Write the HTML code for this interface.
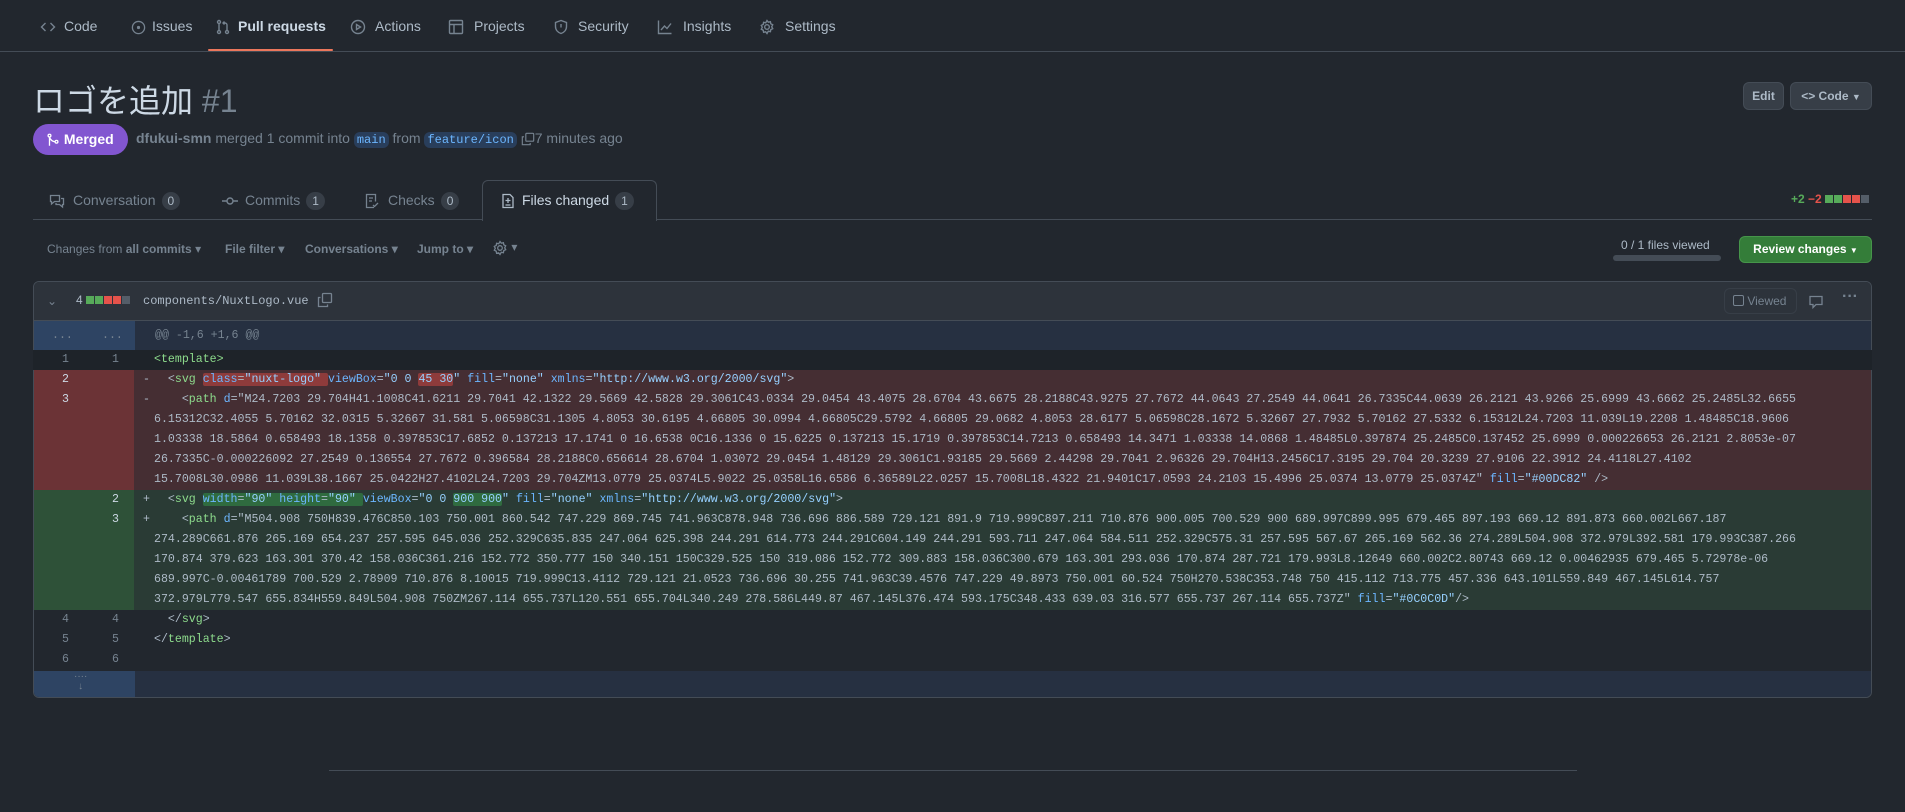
<!DOCTYPE html>
<html><head><meta charset="utf-8">
<style>
*{box-sizing:border-box;margin:0;padding:0}
body{width:1905px;height:812px;background:#22272e;color:#adbac7;font-family:"Liberation Sans","Noto Sans CJK JP",sans-serif;font-size:14px;position:relative;overflow:hidden}
.a{position:absolute;white-space:nowrap}
.nav{position:absolute;left:0;top:0;width:1905px;height:52px;border-bottom:1px solid #444c56}
.nav .a{top:18px;font-size:14px;color:#adbac7}
svg{display:inline-block;vertical-align:middle}
.muted{color:#768390}
.cnt{display:inline-block;background:#373e47;color:#adbac7;border-radius:10px;font-size:12px;padding:1px 6px;margin-left:6px;line-height:16px}
.btn{position:absolute;background:#373e47;border:1px solid #444c56;border-radius:6px;color:#adbac7;font-size:12px;font-weight:bold;text-align:center}
.br{display:inline-block;background:rgba(65,132,228,.25);color:#6cb6ff;font-family:"Liberation Mono",monospace;font-size:12px;padding:1px 3px;border-radius:6px}
.code{font-family:"Liberation Mono",monospace;font-size:11.6px;white-space:pre}
.code .a{white-space:pre}
.row{position:absolute;left:33px;width:1839px;height:20px;line-height:20px}
.n{position:absolute;top:0;width:50px;text-align:right;padding-right:14px;color:#768390;font-family:"Liberation Mono",monospace;font-size:11.6px}
.t{color:#8ddb8c}.at{color:#6cb6ff}.s{color:#96d0ff}
.hr{background:#8e3b3b;border-radius:2px}.hg{background:#2f6b3f;border-radius:2px}
</style></head><body>
<div class="nav">
 <div class="a" style="left:40px"><svg width="16" height="16" viewBox="0 0 16 16" fill="none" stroke="#768390" stroke-width="1.4"><path d="M5.5 4 1.5 8l4 4M10.5 4l4 4-4 4"/></svg></div>
 <div class="a" style="left:64px">Code</div>
 <div class="a" style="left:131px"><svg width="15" height="15" viewBox="0 0 16 16" fill="none" stroke="#768390" stroke-width="1.4"><circle cx="8" cy="8" r="6.5"/><circle cx="8" cy="8" r="1" fill="#768390"/></svg></div>
 <div class="a" style="left:152px">Issues</div>
 <div class="a" style="left:215px"><svg width="16" height="16" viewBox="0 0 16 16" fill="none" stroke="#768390" stroke-width="1.4"><circle cx="4" cy="3" r="1.5"/><circle cx="4" cy="13" r="1.5"/><circle cx="12" cy="13" r="1.5"/><path d="M4 4.5v7M12 11.5V6a2 2 0 0 0-2-2H8M9.5 2.5 8 4l1.5 1.5"/></svg></div>
 <div class="a" style="left:238px;font-weight:bold;color:#cdd9e5">Pull requests</div>
 <div class="a" style="left:350px"><svg width="16" height="16" viewBox="0 0 16 16" fill="none" stroke="#768390" stroke-width="1.4"><circle cx="8" cy="8" r="6.5"/><path d="M6.5 5.5v5l4-2.5z"/></svg></div>
 <div class="a" style="left:375px">Actions</div>
 <div class="a" style="left:448px"><svg width="16" height="16" viewBox="0 0 16 16" fill="none" stroke="#768390" stroke-width="1.4"><rect x="1.5" y="1.5" width="13" height="13" rx="1"/><path d="M1.5 5.5h13M6 5.5v9"/></svg></div>
 <div class="a" style="left:474px">Projects</div>
 <div class="a" style="left:553px"><svg width="16" height="16" viewBox="0 0 16 16" fill="none" stroke="#768390" stroke-width="1.4"><path d="M8 1.5 2.5 3.5v4c0 3.5 2.5 6 5.5 7 3-1 5.5-3.5 5.5-7v-4z"/><path d="M8 5v3.5"/></svg></div>
 <div class="a" style="left:578px">Security</div>
 <div class="a" style="left:657px"><svg width="16" height="16" viewBox="0 0 16 16" fill="none" stroke="#768390" stroke-width="1.4"><path d="M1.5 1.5v13h13M4 11l3.5-4 2.5 2.5 4-5"/></svg></div>
 <div class="a" style="left:683px">Insights</div>
 <div class="a" style="left:759px"><svg width="16" height="16" viewBox="0 0 16 16" fill="none" stroke="#768390" stroke-width="1.4"><circle cx="8" cy="8" r="2.3"/><path d="M8 1.5l1.3 1.7 2.1-.5.4 2.1 1.9 1-1 1.9 1 2-1.9.9-.4 2.1-2.1-.5L8 14.5l-1.3-1.7-2.1.5-.4-2.1-1.9-1 1-1.9-1-1.9 1.9-1 .4-2.1 2.1.5z"/></svg></div>
 <div class="a" style="left:785px">Settings</div>
 <div style="position:absolute;left:208px;top:49px;width:125px;height:2px;background:#ec775c;border-radius:2px"></div>
</div>

<div class="a" style="left:33px;top:76px;font-size:32px;color:#cdd9e5">ロゴを追加 <span class="muted">#1</span></div>
<div class="btn" style="left:1743px;top:82px;width:41px;height:28px;line-height:26px">Edit</div>
<div class="btn" style="left:1790px;top:82px;width:82px;height:28px;line-height:26px">&lt;&gt; Code <span style="font-size:9px">▼</span></div>

<div class="a" style="left:33px;top:124px;width:95px;height:31px;border-radius:16px;background:#8256d0;color:#fff;font-weight:bold;line-height:31px;padding-left:13px"><svg width="14" height="14" viewBox="0 0 16 16" fill="none" stroke="#fff" stroke-width="1.5"><circle cx="4" cy="3" r="1.6"/><circle cx="12" cy="10" r="1.6"/><path d="M4 4.6v10M4 5c1 3 4 5 6.4 5"/></svg> Merged</div>
<div class="a" style="left:136px;top:130px;color:#768390"><b style="color:#768390">dfukui-smn</b> merged 1 commit into <span class="br">main</span> from <span class="br">feature/icon</span> <svg width="14" height="14" viewBox="0 0 16 16" fill="none" stroke="#768390" stroke-width="1.3"><rect x="5.5" y="1.5" width="9" height="9" rx="1"/><path d="M3.5 5.5h-2v9h9v-2"/></svg>7 minutes ago</div>

<div style="position:absolute;left:33px;top:219px;width:1839px;height:1px;background:#444c56"></div>
<div style="position:absolute;left:482px;top:180px;width:175px;height:41px;border:1px solid #444c56;border-bottom:none;border-radius:6px 6px 0 0;background:#22272e"></div>
<div class="a" style="left:49px;top:192px;color:#768390"><svg width="16" height="16" viewBox="0 0 16 16" fill="none" stroke="#768390" stroke-width="1.3"><path d="M1.5 2.5h9v6h-5l-3 2.5v-2.5h-1z M12 5.5h2.5v6h-1v2.5l-3-2.5h-3.5v-1.5"/></svg></div>
<div class="a" style="left:73px;top:192px;color:#768390">Conversation<span class="cnt">0</span></div>
<div class="a" style="left:222px;top:192px"><svg width="16" height="16" viewBox="0 0 16 16" fill="none" stroke="#768390" stroke-width="1.4"><circle cx="8" cy="8" r="3"/><path d="M0 8h5M11 8h5"/></svg></div>
<div class="a" style="left:245px;top:192px;color:#768390">Commits<span class="cnt">1</span></div>
<div class="a" style="left:364px;top:192px"><svg width="16" height="16" viewBox="0 0 16 16" fill="none" stroke="#768390" stroke-width="1.3"><path d="M10 14.5H2.5v-13h9v7M5 5h4M5 8h3M9 12l1.5 1.5L14 10"/></svg></div>
<div class="a" style="left:388px;top:192px;color:#768390">Checks<span class="cnt">0</span></div>
<div class="a" style="left:500px;top:192px"><svg width="16" height="16" viewBox="0 0 16 16" fill="none" stroke="#adbac7" stroke-width="1.3"><path d="M3 1.5h7l3 3v10H3z M8 5v5M5.5 7.5h5M5.5 12h5"/></svg></div>
<div class="a" style="left:522px;top:192px;color:#cdd9e5">Files changed<span class="cnt">1</span></div>
<div class="a" style="left:1791px;top:192px;font-size:12px;font-weight:bold"><span style="color:#57ab5a">+2</span> <span style="color:#e5534b">−2</span> <span style="display:inline-block;width:8px;height:8px;background:#57ab5a"></span><span style="display:inline-block;width:8px;height:8px;background:#57ab5a;margin-left:1px"></span><span style="display:inline-block;width:8px;height:8px;background:#e5534b;margin-left:1px"></span><span style="display:inline-block;width:8px;height:8px;background:#e5534b;margin-left:1px"></span><span style="display:inline-block;width:8px;height:8px;background:#545d68;margin-left:1px"></span></div>

<div class="a" style="left:47px;top:242px;font-size:12px;color:#768390">Changes from <b>all commits</b> ▾</div>
<div class="a" style="left:225px;top:242px;font-size:12px;color:#768390;font-weight:bold">File filter ▾</div>
<div class="a" style="left:305px;top:242px;font-size:12px;color:#768390;font-weight:bold">Conversations ▾</div>
<div class="a" style="left:417px;top:242px;font-size:12px;color:#768390;font-weight:bold">Jump to ▾</div>
<div class="a" style="left:492px;top:240px;font-size:12px;color:#768390"><svg width="16" height="16" viewBox="0 0 16 16" fill="none" stroke="#768390" stroke-width="1.3"><circle cx="8" cy="8" r="2.3"/><path d="M8 1.5l1.3 1.7 2.1-.5.4 2.1 1.9 1-1 1.9 1 2-1.9.9-.4 2.1-2.1-.5L8 14.5l-1.3-1.7-2.1.5-.4-2.1-1.9-1 1-1.9-1-1.9 1.9-1 .4-2.1 2.1.5z"/></svg> ▾</div>
<div class="a" style="left:1621px;top:238px;font-size:12px;color:#adbac7">0 / 1 files viewed</div>
<div class="a" style="left:1613px;top:255px;width:108px;height:6px;border-radius:3px;background:#444c56"></div>
<div class="a" style="left:1739px;top:236px;width:133px;height:27px;border-radius:6px;background:#347d39;border:1px solid #46954a;color:#fff;font-size:12px;font-weight:bold;line-height:25px;text-align:center">Review changes <span style="font-size:8px">▼</span></div>

<div style="position:absolute;left:33px;top:281px;width:1839px;height:417px;border:1px solid #444c56;border-radius:6px;overflow:hidden;background:#22272e">
 <div style="height:39px;background:#2d333b;border-bottom:1px solid #444c56;position:relative">
  <div class="a" style="left:13px;top:12px;color:#768390;font-size:12px">⌄</div>
  <div class="a" style="left:42px;top:11px;font-size:12px;color:#adbac7">4 <span style="display:inline-block;width:8px;height:8px;background:#57ab5a"></span><span style="display:inline-block;width:8px;height:8px;background:#57ab5a;margin-left:1px"></span><span style="display:inline-block;width:8px;height:8px;background:#e5534b;margin-left:1px"></span><span style="display:inline-block;width:8px;height:8px;background:#e5534b;margin-left:1px"></span><span style="display:inline-block;width:8px;height:8px;background:#545d68;margin-left:1px"></span></div>
  <div class="a" style="left:109px;top:12px;font-size:12px;color:#adbac7;font-family:'Liberation Mono',monospace">components/NuxtLogo.vue</div>
  <div class="a" style="left:283px;top:9px"><svg width="16" height="16" viewBox="0 0 16 16" fill="none" stroke="#768390" stroke-width="1.3"><rect x="5.5" y="1.5" width="9" height="9" rx="1"/><path d="M3.5 5.5h-2v9h9v-2"/></svg></div>
  <div class="a" style="left:1690px;top:6px;width:73px;height:26px;border:1px solid #373e47;border-radius:6px;font-size:12px;color:#768390;line-height:24px;padding-left:8px"><span style="display:inline-block;width:11px;height:11px;border:1px solid #768390;border-radius:2px;vertical-align:-1px"></span> Viewed</div>
  <div class="a" style="left:1774px;top:11px"><svg width="16" height="16" viewBox="0 0 16 16" fill="none" stroke="#768390" stroke-width="1.3"><path d="M2 2.5h12v8H8l-3 3v-3H2z"/></svg></div>
  <div class="a" style="left:1808px;top:6px;color:#768390;font-size:16px;font-weight:bold">···</div>
 </div>
 <div style="position:absolute;left:0;top:39px;width:1839px;height:30px;background:#263041"></div>
 <div style="position:absolute;left:0;top:39px;width:101px;height:30px;background:#2e4463"></div>
 <div class="a" style="left:18px;top:47px;color:#768390;font-family:'Liberation Mono',monospace;font-size:11.6px">...</div>
 <div class="a" style="left:68px;top:47px;color:#768390;font-family:'Liberation Mono',monospace;font-size:11.6px">...</div>
 <div class="a" style="left:121px;top:47px;color:#768390;font-family:'Liberation Mono',monospace;font-size:11.6px">@@ -1,6 +1,6 @@</div>
 <div style="position:absolute;left:0;top:389px;width:1839px;height:28px;background:#263041"></div>
 <div style="position:absolute;left:0;top:389px;width:101px;height:28px;background:#2e4463"></div>
 <div class="a" style="left:40px;top:390px;color:#768390;font-size:10px;line-height:10px;text-align:center">····<br>↓</div>
</div>

<div class="code">
<div class="row" style="top:350px;background:#1e2329"><span class="n" style="left:0">1</span><span class="n" style="left:50px">1</span><span class="a" style="left:121px"><span class="t">&lt;template&gt;</span></span></div>

<div style="position:absolute;left:34px;top:370px;width:100px;height:120px;background:#6b3336"></div>
<div style="position:absolute;left:134px;top:370px;width:1737px;height:120px;background:#452e33"></div>
<div class="row" style="top:370px"><span class="n" style="left:0;color:#cdd9e5">2</span><span class="a" style="left:110px">-</span><span class="a" style="left:121px">  &lt;<span class="t">svg</span> <span class="hr"><span class="at">class</span>=<span class="s">"nuxt-logo"</span> </span><span class="at">viewBox</span>=<span class="s">"0 0 <span class="hr">45 30</span>"</span> <span class="at">fill</span>=<span class="s">"none"</span> <span class="at">xmlns</span>=<span class="s">"http://www.w3.org/2000/svg"</span>&gt;</span></div>
<div class="row" style="top:390px"><span class="n" style="left:0;color:#cdd9e5">3</span><span class="a" style="left:110px">-</span><span class="a" style="left:121px">    &lt;<span class="t">path</span> <span class="at">d</span>="M24.7203 29.704H41.1008C41.6211 29.7041 42.1322 29.5669 42.5828 29.3061C43.0334 29.0454 43.4075 28.6704 43.6675 28.2188C43.9275 27.7672 44.0643 27.2549 44.0641 26.7335C44.0639 26.2121 43.9266 25.6999 43.6662 25.2485L32.6655</span></div>
<div class="row" style="top:410px"><span class="a" style="left:121px">6.15312C32.4055 5.70162 32.0315 5.32667 31.581 5.06598C31.1305 4.8053 30.6195 4.66805 30.0994 4.66805C29.5792 4.66805 29.0682 4.8053 28.6177 5.06598C28.1672 5.32667 27.7932 5.70162 27.5332 6.15312L24.7203 11.039L19.2208 1.48485C18.9606</span></div>
<div class="row" style="top:430px"><span class="a" style="left:121px">1.03338 18.5864 0.658493 18.1358 0.397853C17.6852 0.137213 17.1741 0 16.6538 0C16.1336 0 15.6225 0.137213 15.1719 0.397853C14.7213 0.658493 14.3471 1.03338 14.0868 1.48485L0.397874 25.2485C0.137452 25.6999 0.000226653 26.2121 2.8053e-07</span></div>
<div class="row" style="top:450px"><span class="a" style="left:121px">26.7335C-0.000226092 27.2549 0.136554 27.7672 0.396584 28.2188C0.656614 28.6704 1.03072 29.0454 1.48129 29.3061C1.93185 29.5669 2.44298 29.7041 2.96326 29.704H13.2456C17.3195 29.704 20.3239 27.9106 22.3912 24.4118L27.4102</span></div>
<div class="row" style="top:470px"><span class="a" style="left:121px">15.7008L30.0986 11.039L38.1667 25.0422H27.4102L24.7203 29.704ZM13.0779 25.0374L5.9022 25.0358L16.6586 6.36589L22.0257 15.7008L18.4322 21.9401C17.0593 24.2103 15.4996 25.0374 13.0779 25.0374Z" <span class="at">fill</span>=<span class="s">"#00DC82"</span> /&gt;</span></div>

<div style="position:absolute;left:34px;top:490px;width:100px;height:120px;background:#2e5138"></div>
<div style="position:absolute;left:134px;top:490px;width:1737px;height:120px;background:#2a3b35"></div>
<div class="row" style="top:490px"><span class="n" style="left:50px;color:#cdd9e5">2</span><span class="a" style="left:110px">+</span><span class="a" style="left:121px">  &lt;<span class="t">svg</span> <span class="hg"><span class="at">width</span>=<span class="s">"90"</span> <span class="at">height</span>=<span class="s">"90"</span> </span><span class="at">viewBox</span>=<span class="s">"0 0 <span class="hg">900 900</span>"</span> <span class="at">fill</span>=<span class="s">"none"</span> <span class="at">xmlns</span>=<span class="s">"http://www.w3.org/2000/svg"</span>&gt;</span></div>
<div class="row" style="top:510px"><span class="n" style="left:50px;color:#cdd9e5">3</span><span class="a" style="left:110px">+</span><span class="a" style="left:121px">    &lt;<span class="t">path</span> <span class="at">d</span>="M504.908 750H839.476C850.103 750.001 860.542 747.229 869.745 741.963C878.948 736.696 886.589 729.121 891.9 719.999C897.211 710.876 900.005 700.529 900 689.997C899.995 679.465 897.193 669.12 891.873 660.002L667.187</span></div>
<div class="row" style="top:530px"><span class="a" style="left:121px">274.289C661.876 265.169 654.237 257.595 645.036 252.329C635.835 247.064 625.398 244.291 614.773 244.291C604.149 244.291 593.711 247.064 584.511 252.329C575.31 257.595 567.67 265.169 562.36 274.289L504.908 372.979L392.581 179.993C387.266</span></div>
<div class="row" style="top:550px"><span class="a" style="left:121px">170.874 379.623 163.301 370.42 158.036C361.216 152.772 350.777 150 340.151 150C329.525 150 319.086 152.772 309.883 158.036C300.679 163.301 293.036 170.874 287.721 179.993L8.12649 660.002C2.80743 669.12 0.00462935 679.465 5.72978e-06</span></div>
<div class="row" style="top:570px"><span class="a" style="left:121px">689.997C-0.00461789 700.529 2.78909 710.876 8.10015 719.999C13.4112 729.121 21.0523 736.696 30.255 741.963C39.4576 747.229 49.8973 750.001 60.524 750H270.538C353.748 750 415.112 713.775 457.336 643.101L559.849 467.145L614.757</span></div>
<div class="row" style="top:590px"><span class="a" style="left:121px">372.979L779.547 655.834H559.849L504.908 750ZM267.114 655.737L120.551 655.704L340.249 278.586L449.87 467.145L376.474 593.175C348.433 639.03 316.577 655.737 267.114 655.737Z" <span class="at">fill</span>=<span class="s">"#0C0C0D"</span>/&gt;</span></div>

<div class="row" style="top:610px"><span class="n" style="left:0">4</span><span class="n" style="left:50px">4</span><span class="a" style="left:121px">  &lt;/<span class="t">svg</span>&gt;</span></div>
<div class="row" style="top:630px"><span class="n" style="left:0">5</span><span class="n" style="left:50px">5</span><span class="a" style="left:121px">&lt;/<span class="t">template</span>&gt;</span></div>
<div class="row" style="top:650px"><span class="n" style="left:0">6</span><span class="n" style="left:50px">6</span></div>
</div>

<div style="position:absolute;left:329px;top:770px;width:1248px;height:1px;background:#444c56"></div>
</body></html>
